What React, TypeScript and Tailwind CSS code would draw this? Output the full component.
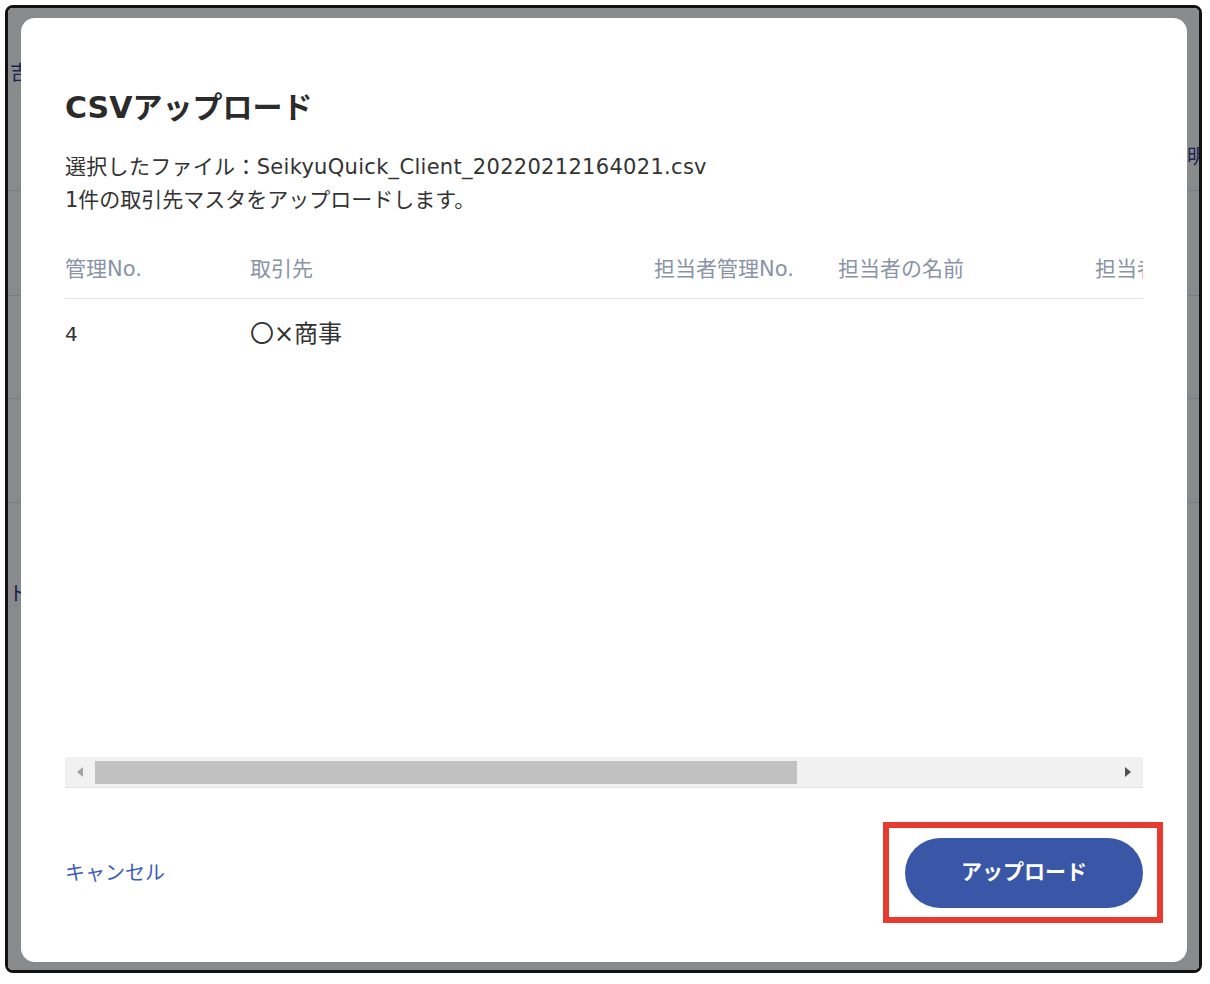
import React from 'react';

const headers = [
  { label: '管理No.', w: 'w-[185px]' },
  { label: '取引先', w: 'w-[404px]' },
  { label: '担当者管理No.', w: 'w-[184px]' },
  { label: '担当者の名前', w: 'w-[257px]' },
  { label: '担当者メールアドレス', w: 'w-[320px]' },
];

const rows = [['4', '〇×商事', '', '', '']];

function BackgroundPage() {
  // the page that sits behind the dimmed overlay
  return (
    <div className="h-full bg-white text-[#2f3a8f] text-[20px]">
      <div className="h-[183px] border-b border-[#e1e4e9] flex flex-col justify-between pt-[50px] pb-[18px]">
        <div className="pl-[2px]">吉</div>
        <div className="self-end -mr-[8px]">明</div>
      </div>
      <div className="h-[105px] border-b border-[#e1e4e9]" />
      <div className="h-[103px] border-b border-[#e1e4e9]" />
      <div className="h-[104px] border-b border-[#e1e4e9]" />
      <div className="pt-[76px] pl-[1px]">ド</div>
    </div>
  );
}

function ScrollBar() {
  return (
    <div className="h-[31px] flex items-center bg-[#f1f1f1] border-b border-[#dfe3ea]">
      <div className="w-[30px] flex justify-center">
        <svg width="6" height="10" viewBox="0 0 6 10">
          <path d="M6 0 L0 5 L6 10 Z" fill="#a3a3a3" />
        </svg>
      </div>
      <div className="flex-1">
        <div className="w-[702px] h-[23px] bg-[#c1c1c1]" />
      </div>
      <div className="w-[30px] flex justify-center">
        <svg width="6" height="10" viewBox="0 0 6 10">
          <path d="M0 0 L6 5 L0 10 Z" fill="#505050" />
        </svg>
      </div>
    </div>
  );
}

export default function App() {
  return (
    <div className="w-[1210px] h-[984px] bg-white pl-[5px] pt-[5px] font-['DejaVu_Sans','Noto_Sans_CJK_JP',sans-serif]">
      <div className="relative w-[1197px] h-[968px] rounded-[8px] border-[3px] border-[#111] overflow-hidden">
        <BackgroundPage />

        {/* overlay + modal */}
        <div className="absolute inset-0 bg-[rgba(8,10,14,0.48)] pl-[13px] pt-[10px]">
          <div className="w-[1166px] h-[944px] rounded-[14px] bg-white px-[44px] pt-[70px] flex flex-col">
            <h2 className="text-[30px] leading-[40px] font-bold text-[#2b2b2b]">CSVアップロード</h2>

            <div className="mt-[23px] text-[21px] leading-[33px] text-[#333]">
              <p className="tracking-[0.3px]">選択したファイル：SeikyuQuick_Client_20220212164021.csv</p>
              <p>1件の取引先マスタをアップロードします。</p>
            </div>

            {/* table */}
            <div className="mt-[24px] h-[516px] overflow-hidden">
              <div className="w-max">
                <div className="flex border-b border-[#e1e5eb] h-[58px] items-center text-[21px] text-[#8a93a5]">
                  {headers.map((h) => (
                    <div key={h.label} className={`${h.w} shrink-0 whitespace-nowrap`}>
                      {h.label}
                    </div>
                  ))}
                </div>
                {rows.map((r, i) => (
                  <div key={i} className="flex h-[70px] items-center text-[24px] text-[#333]">
                    {r.map((cell, j) => (
                      <div
                        key={j}
                        className={`${headers[j].w} shrink-0 whitespace-nowrap ${j === 0 ? 'text-[20px]' : ''}`}
                      >
                        {cell}
                      </div>
                    ))}
                  </div>
                ))}
              </div>
            </div>

            <ScrollBar />

            {/* footer */}
            <div className="mt-[50px] flex items-center justify-between">
              <button className="text-[20px] text-[#3d5db5]">キャンセル</button>
              <div className="relative">
                <button className="w-[238px] h-[70px] rounded-full bg-[#3a56a7] text-white text-[21px] font-bold">
                  アップロード
                </button>
                <span className="absolute -left-[22px] -right-[20px] -top-[16px] -bottom-[15px] border-[6px] border-[#e63b2e] pointer-events-none" />
              </div>
            </div>
          </div>
        </div>
      </div>
    </div>
  );
}
